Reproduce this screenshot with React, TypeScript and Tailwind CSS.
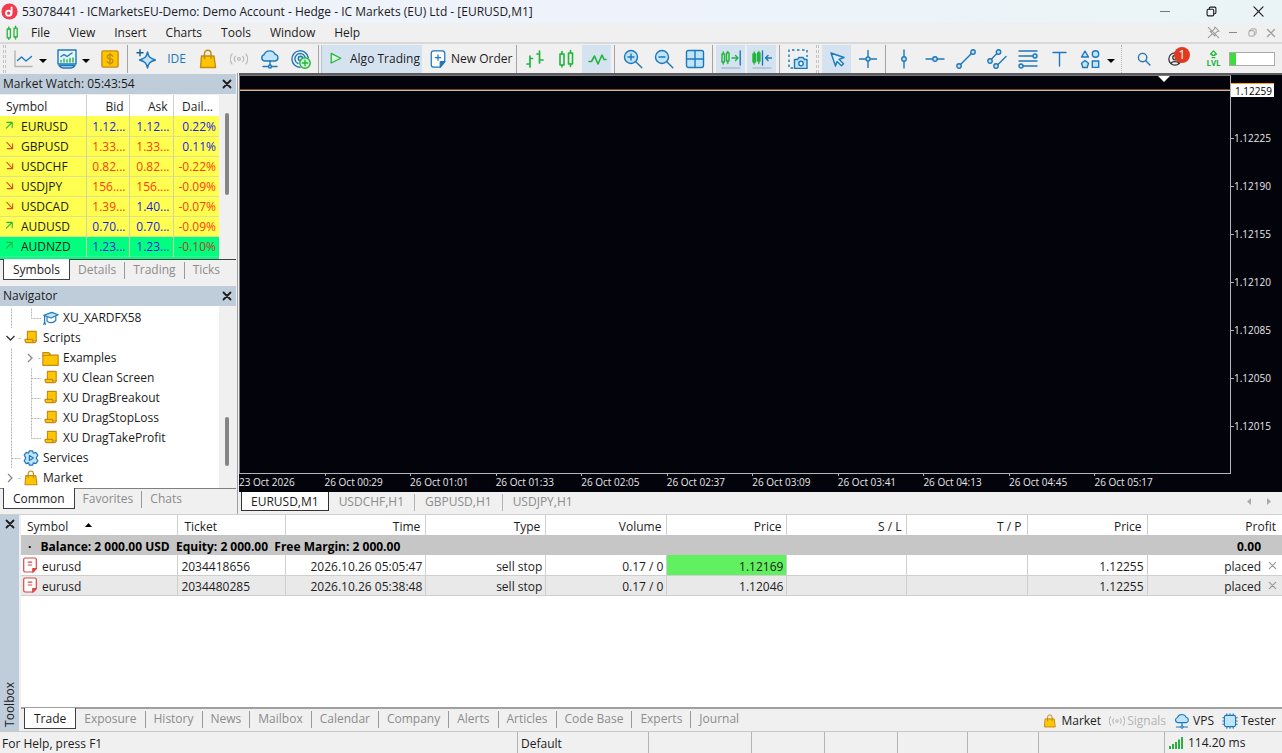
import React from "react";
import clsx from "clsx";

const BLUE = "#1f78b8";
const SKY = "#bfe4fc";
const GREEN = "#22b53c";
const GOLD = "#ffc600";
const AMBER = "#c48a14";

type IconProps = {
  children: React.ReactNode;
  className?: string;
  stroke?: string;
  fill?: string;
  width?: number;
};

const Icon = ({ children, className = "size-5", stroke = BLUE, fill = "none", width = 1.4 }: IconProps) => (
  <svg
    viewBox="0 0 20 20"
    className={clsx("shrink-0", className)}
    fill={fill}
    stroke={stroke}
    strokeWidth={width}
    strokeLinecap="round"
    strokeLinejoin="round"
    aria-hidden="true"
  >
    {children}
  </svg>
);

const BagIcon = ({ className }: { className?: string }) => (
  <Icon className={className} stroke={AMBER} fill={GOLD}>
    <path d="M6.500 8V4.500a3 3 0 0 1 6.500 0V8" fill="none" />
    <path d="M3.500 7h12.500l1.500 11.500H2.500z" />
    <path d="M13 7v2.500M6.500 7v2.500" />
  </Icon>
);

const CloudIcon = ({ className }: { className?: string }) => (
  <Icon className={className}>
    <path d="M4.500 12a3.300 3.300 0 0 1-.3-6.400 6 6 0 0 1 11-.2 3.400 3.400 0 0 1 .3 6.600z" fill={SKY} />
    <path d="M10 12v4M3 17.500h5M12 17.500h5" />
    <circle cx="10" cy="17.500" r="1.500" fill={SKY} />
  </Icon>
);

const SignalIcon = ({ className }: { className?: string }) => (
  <Icon className={className} stroke="#b9b9b9" width={1.3}>
    <circle cx="10" cy="10" r="1.600" />
    <path d="M5.800 7a5 5 0 0 0 0 6M14.200 7a5 5 0 0 1 0 6M2.200 4.500a9.500 9.500 0 0 0 0 11M17.800 4.500a9.500 9.500 0 0 1 0 11" />
  </Icon>
);

const CandlesIcon = ({ className }: { className?: string }) => (
  <Icon className={className} stroke={GREEN} width={1.6}>
    <rect x="4" y="5" width="4" height="11" />
    <rect x="12.500" y="4" width="4" height="11" />
    <path d="M6 2.500V5M6 16v2M14.500 1.500V4M14.500 15v2.500" />
  </Icon>
);

const CloseIcon = ({ className = "size-[10px]", width = 3.6 }: { className?: string; width?: number }) => (
  <Icon className={className} stroke="currentColor" width={width}>
    <path d="M3 3l14 14M17 3L3 17" />
  </Icon>
);

const ScriptIcon = () => (
  <Icon className="mb-[2px] size-4" stroke={AMBER} fill={GOLD}>
    <path d="M5.500 3h11v12H5.500z" />
    <path d="M2.500 13h9.500c0 2 .5 4 2 4H4.500c-1.500 0-2-2-2-4zM16.500 14.500c0 1.500-.5 2.500-2 2.500" />
  </Icon>
);

const RestoreIcon = ({ className }: { className?: string }) => (
  <Icon className={className} stroke="currentColor" width={2}>
    <rect x="2" y="6" width="12" height="12" rx="2" />
    <path d="M6 6V4a2 2 0 0 1 2-2h8a2 2 0 0 1 2 2v8a2 2 0 0 1-2 2h-2" />
  </Icon>
);

const ToolButton = ({
  label,
  active,
  children,
}: {
  label: string;
  active?: boolean;
  children: React.ReactNode;
}) => (
  <button
    type="button"
    aria-label={label}
    aria-pressed={active}
    className={clsx(
      "flex h-[28px] w-[31px] shrink-0 items-center justify-center border-x border-transparent bg-clip-padding",
      active && "bg-[#d5e3f1]"
    )}
  >
    {children}
  </button>
);

const Caret = ({ label }: { label: string }) => (
  <button type="button" aria-label={label} className="flex h-[28px] w-[8px] shrink-0 items-center pt-1">
    <svg viewBox="0 0 8 4" className="h-[4px] w-[8px]" aria-hidden="true">
      <path d="M0 0h8L4 4z" fill="#000" />
    </svg>
  </button>
);

const Sep = () => <span className="mx-[2px] h-[28px] w-px shrink-0 bg-[#a5a5a5]" />;

const Grip = () => (
  <span className="flex h-[28px] w-2 shrink-0 justify-center gap-px">
    <span className="border-l border-dashed border-[#c4c4c4]" />
    <span className="border-l border-dashed border-[#c4c4c4]" />
  </span>
);

const menus = ["File", "View", "Insert", "Charts", "Tools", "Window", "Help"];

const TitleBar = () => (
  <header className="flex h-[23px] shrink-0 items-center bg-gradient-to-r from-[#eff2f9] via-[#eef3fb] to-[#eaf4f6]">
    <svg viewBox="0 0 20 20" className="ml-px size-[17px]" aria-hidden="true">
      <circle cx="10" cy="10" r="9.500" fill="#f5394c" />
      <circle cx="9" cy="12" r="3" fill="none" stroke="#fff" strokeWidth="2.200" />
      <path d="M12.500 4.500v7c0 2-.8 3-2 3.500" fill="none" stroke="#fff" strokeWidth="2.200" />
    </svg>
    <h1 className="ml-1 flex-1 truncate">
      53078441 - ICMarketsEU-Demo: Demo Account - Hedge - IC Markets (EU) Ltd - [EURUSD,M1]
    </h1>
    <button type="button" aria-label="Minimize" className="flex w-[47px] justify-center">
      <span className="h-px w-[10px] bg-[#777]" />
    </button>
    <button type="button" aria-label="Restore" className="flex w-[47px] justify-center">
      <RestoreIcon className="size-[11px]" />
    </button>
    <button type="button" aria-label="Close" className="flex w-[47px] justify-center">
      <CloseIcon className="size-[13px]" width={1.8} />
    </button>
  </header>
);

const MenuBar = () => (
  <nav className="flex h-[19px] shrink-0 items-center">
    <CandlesIcon className="ml-1 size-4" />
    <ul className="flex flex-1 gap-[19px] pt-px pl-[11px]">
      {menus.map((m) => (
        <li key={m}>
          <button type="button">{m}</button>
        </li>
      ))}
    </ul>
    <div className="flex items-center gap-[7px] pr-[5px] text-[#9c9c9c]">
      <button type="button" aria-label="Unpin">
        <Icon className="size-[13px]" stroke="currentColor" width={1.6}>
          <path d="M12 1.500l6.500 6.500-3 .5-3 3-.5 4L4.500 8l4-.5 3-3zM8 12l-6 6M2 2l16 16" />
        </Icon>
      </button>
      <button type="button" aria-label="Minimize chart" className="flex w-3 justify-center">
        <span className="h-px w-2 bg-[#888]" />
      </button>
      <button type="button" aria-label="Restore chart" className="flex w-3 justify-center">
        <RestoreIcon className="size-[9px]" />
      </button>
      <button type="button" aria-label="Close chart" className="flex w-3 justify-center">
        <CloseIcon className="size-[10px]" width={2.6} />
      </button>
    </div>
  </nav>
);

const ToolBar = () => (
  <div className="flex h-[31px] shrink-0 items-center border-t-2 border-[#d9d9d9]">
    <Grip />
    <ToolButton label="Chart type">
      <Icon>
        <path d="M1 2v15.500H18" stroke="#b4b4b4" />
        <path d="M3.500 11.500l4-3.500 4.500 4 5.500-4.500" />
      </Icon>
    </ToolButton>
    <Caret label="Chart type options" />
    <span className="w-1 shrink-0" />
    <ToolButton label="Templates">
      <Icon>
        <path d="M1 1h18v14H1z" fill="#e2f4fe" />
        <path d="M2 16.500c1.500 2 3 2.500 4 2.500h8c1 0 2.500-.5 4-2.500z" fill={SKY} />
        <path d="M4 7.500l3-2 3 2 5-3.500" />
        <path d="M4 13v-1.500M7 13v-3M10 13v-2M13 13v-3.500M16 13V9" stroke={GREEN} />
      </Icon>
    </ToolButton>
    <Caret label="Template options" />
    <span className="w-1 shrink-0" />
    <ToolButton label="Symbols">
      <Icon className="size-[18px]" stroke={AMBER} width={1.5}>
        <rect x="1" y="1" width="18" height="18" rx="1.500" fill={GOLD} />
        <path d="M13 7c-.5-1.300-1.500-1.700-3-1.700-4 0-4 4.300 0 4.600 4.300.3 4.200 4.800 0 4.800-1.800 0-3-.7-3.300-2M10 3.800v12.400" />
      </Icon>
    </ToolButton>
    <Sep />
    <ToolButton label="AI assistant">
      <Icon>
        <path d="M11.500 3c1 5 2.500 6.500 8 8-5.500 1.500-7 3-8 8-1-5-2.500-6.500-8-8 5.500-1.500 7-3 8-8z" fill={SKY} />
        <path d="M4 .8v6M1 3.800h6" stroke="#125f9c" width={2} />
      </Icon>
    </ToolButton>
    <ToolButton label="IDE">
      <span className="text-[12px] text-[#1f78b8]">IDE</span>
    </ToolButton>
    <ToolButton label="Market">
      <BagIcon className="size-5" />
    </ToolButton>
    <ToolButton label="Signals">
      <SignalIcon className="size-[18px]" />
    </ToolButton>
    <ToolButton label="Virtual hosting">
      <CloudIcon className="size-5" />
    </ToolButton>
    <ToolButton label="Community">
      <Icon>
        <path d="M9 18.200A8.200 8.200 0 1 1 17.200 8.500M7 14.500a5.200 5.200 0 1 1 7-6.500" />
        <circle cx="9.500" cy="9.500" r="2.200" fill={SKY} />
        <circle cx="14" cy="14" r="5.200" fill="#d5f8da" stroke={GREEN} />
        <path d="M14 11.200v5.600M11.200 14h5.600" stroke={GREEN} />
      </Icon>
    </ToolButton>
    <Sep />
    <button type="button" className="flex h-[28px] w-[101px] shrink-0 items-center gap-[6px] border-l border-[#b8c4d0] bg-[#d5e3f1] pl-[6px]">
      <Icon className="size-4" stroke={GREEN} width={1.6}>
        <path d="M4 3l12 6-12 6z" fill="#d9f8dc" />
      </Icon>
      <span className="pt-px whitespace-nowrap">Algo Trading</span>
    </button>
    <button type="button" className="flex h-[28px] w-[92px] shrink-0 items-center gap-1 pl-[7px]">
      <Icon className="size-[18px]">
        <path d="M5 1h10a2.500 2.500 0 0 1 2.500 2.500V13l-5 6H5a2.500 2.500 0 0 1-2.500-2.500v-13A2.500 2.500 0 0 1 5 1z" fill="#fff" />
        <path d="M12.500 19v-6h5z" fill={BLUE} />
        <path d="M10 5.500v6M7 8.500h6" />
      </Icon>
      <span className="pt-px whitespace-nowrap">New Order</span>
    </button>
    <Sep />
    <ToolButton label="Bar chart">
      <Icon stroke={GREEN} width={1.7}>
        <path d="M5 7v11M2 15h3M5 9.500h2.500M14.500 2v12M12 5h2.500M14.500 11h3.500" />
      </Icon>
    </ToolButton>
    <ToolButton label="Candlesticks">
      <CandlesIcon className="size-5" />
    </ToolButton>
    <ToolButton label="Line chart" active>
      <Icon stroke={GREEN} width={1.6}>
        <path d="M2 12.500h2.500l3-5.500 3.500 8 4-9 2 4.500h2" />
      </Icon>
    </ToolButton>
    <Sep />
    <ToolButton label="Zoom in">
      <Icon>
        <circle cx="8" cy="8" r="6.500" fill={SKY} />
        <path d="M12.800 12.800l6 6M8 5v6M5 8h6" />
      </Icon>
    </ToolButton>
    <ToolButton label="Zoom out">
      <Icon>
        <circle cx="8" cy="8" r="6.500" fill={SKY} />
        <path d="M12.800 12.800l6 6M5 8h6" />
      </Icon>
    </ToolButton>
    <ToolButton label="Tile windows">
      <Icon>
        <rect x="1.500" y="1.500" width="17" height="17" rx="2" fill={SKY} />
        <path d="M10 1.500v17M1.500 10h17" />
      </Icon>
    </ToolButton>
    <Sep />
    <ToolButton label="Auto scroll" active>
      <Icon stroke={GREEN} width={1.4}>
        <path d="M1 5h2.500v8H1zM5.500 4H8v8H5.500zM2.200 3v2M2.200 13v2M6.800 2.500V4M6.800 12v2.500" />
        <path d="M11 9h6M14.500 6.500L17 9l-2.500 2.500" />
        <path d="M19.200 2v14" stroke={BLUE} />
        <path d="M1 19h18" stroke="#b4bbc3" />
      </Icon>
    </ToolButton>
    <ToolButton label="Chart shift" active>
      <Icon stroke={GREEN} width={1.4}>
        <path d="M1 5h2.500v8H1zM5.500 4H8v8H5.500zM2.200 3v2M2.200 13v2M6.800 2.500V4M6.800 12v2.500" fill={GREEN} />
        <path d="M10.500 2v14M19.500 9h-6M16 6.500L13.500 9l2.500 2.500" stroke={BLUE} />
        <path d="M1 19h18" stroke="#b4bbc3" />
      </Icon>
    </ToolButton>
    <Sep />
    <ToolButton label="Screenshot">
      <Icon>
        <path d="M5 19H1V1h18v7" strokeDasharray="2.500 2.500" strokeLinecap="butt" />
        <path d="M6.500 10.500h3L11 8.500h4l1.500 2h2.500v9H6.500z" fill={SKY} />
        <circle cx="13" cy="14.500" r="2.200" fill="#fff" />
      </Icon>
    </ToolButton>
    <Grip />
    <ToolButton label="Cursor" active>
      <Icon>
        <path d="M4 4l13 4.500-5 1.800 4.500 4.500-2 2L10 12.500 8.500 17z" fill="#d9eefc" />
      </Icon>
    </ToolButton>
    <ToolButton label="Crosshair">
      <Icon>
        <path d="M10 1.500v6M10 12.500v6M1.500 10h6M12.500 10h6" />
        <circle cx="10" cy="10" r="2" fill={SKY} />
      </Icon>
    </ToolButton>
    <Sep />
    <ToolButton label="Vertical line">
      <Icon>
        <path d="M10 1v7M10 12v7" />
        <circle cx="10" cy="10" r="2.200" fill={SKY} />
      </Icon>
    </ToolButton>
    <ToolButton label="Horizontal line">
      <Icon>
        <path d="M1 10h7M12 10h7" />
        <circle cx="10" cy="10" r="2.200" fill={SKY} />
      </Icon>
    </ToolButton>
    <ToolButton label="Trendline">
      <Icon>
        <path d="M4 16L16 4" />
        <circle cx="3" cy="17" r="2.200" fill={SKY} />
        <circle cx="17" cy="3" r="2.200" fill={SKY} />
      </Icon>
    </ToolButton>
    <ToolButton label="Channel">
      <Icon>
        <path d="M3.500 11L11 3.500M10 16.500l9-9" />
        <circle cx="3" cy="12" r="2.200" fill={SKY} />
        <circle cx="11.500" cy="3" r="2.200" fill={SKY} />
        <circle cx="9" cy="17" r="2.200" fill={SKY} />
      </Icon>
    </ToolButton>
    <ToolButton label="Fibonacci">
      <Icon>
        <path d="M1 2h18M1 7h14M1 12h18M5 17h14" />
        <circle cx="17" cy="7" r="2" fill={SKY} />
        <circle cx="3" cy="17" r="2" fill={SKY} />
      </Icon>
    </ToolButton>
    <ToolButton label="Text">
      <Icon>
        <path d="M4 3.500h13M10.500 3.500V17" />
      </Icon>
    </ToolButton>
    <ToolButton label="Shapes">
      <Icon fill={SKY}>
        <path d="M5 2l3.500 6h-7z" />
        <circle cx="15.500" cy="5" r="3.200" />
        <path d="M5 11.500l3.500 2.700-1.300 4.300H2.800L1.500 14.200z" />
        <rect x="12.300" y="12" width="6.400" height="6.400" />
      </Icon>
    </ToolButton>
    <span className="w-[2px] shrink-0" />
    <Caret label="Shape options" />
    <span className="mx-[6px] h-[28px] shrink-0 border-l border-dotted border-[#b0b0b0]" />
    <ToolButton label="Search">
      <Icon className="size-[14px]" width={2}>
        <circle cx="8" cy="8" r="6" />
        <path d="M12.500 12.500l6 6" />
      </Icon>
    </ToolButton>
    <button type="button" aria-label="Account, 1 notification" className="relative flex h-[28px] w-[31px] shrink-0 items-center justify-center">
      <Icon className="size-[14px]" stroke="#333" width={1.8}>
        <circle cx="10" cy="10" r="8.800" />
        <circle cx="10" cy="8" r="3.200" />
        <path d="M4.500 16.500c1-3.500 10-3.500 11 0" />
      </Icon>
      <span className="absolute top-[2px] right-0 flex size-[16px] items-center justify-center rounded-full bg-[#e03a20] text-[12px] text-white">
        1
      </span>
    </button>
    <button type="button" className="ml-2 flex w-[31px] shrink-0 flex-col items-center text-[8px] leading-[8px] font-bold text-[#22b53c]">
      <Icon className="size-[9px]" stroke={GREEN} width={2.6}>
        <path d="M10 2l7 7h-4v3H7V9H3zM7 17h6" />
      </Icon>
      LVL
    </button>
    <div role="progressbar" aria-label="Level" aria-valuenow={13} className="h-[14px] w-[46px] shrink-0 border border-[#aaa] bg-white">
      <div className="h-full w-[6px] bg-[#3fdc3f]" />
    </div>
  </div>
);

const PanelTitle = ({ title }: { title: string }) => (
  <div className="flex h-5 shrink-0 items-center justify-between bg-[#bfcddb] pr-1 pl-[3px]">
    <h2>{title}</h2>
    <button type="button" aria-label={`Close ${title}`}>
      <CloseIcon />
    </button>
  </div>
);

// first tab is the selected one
const Tabs = ({ tabs }: { tabs: string[] }) => (
  <div role="tablist" className="flex items-start pl-[3px]">
    {tabs.map((tab, i) => (
      <button
        key={tab}
        type="button"
        role="tab"
        aria-selected={i === 0}
        className={clsx(
          "flex items-center whitespace-nowrap",
          i === 0
            ? "-mt-px h-[21px] border border-t-0 border-[#404040] bg-white px-[9px] pt-px"
            : "h-5 text-[#8c8c8c]"
        )}
      >
        {i > 1 && <span className="h-[17px] w-px bg-[#9a9a9a]" />}
        <span className={clsx(i > 0 && "px-2")}>{tab}</span>
      </button>
    ))}
  </div>
);

type Quote = {
  symbol: string;
  up: boolean;
  cells: [string, boolean][];
  green?: boolean;
};

const quotes: Quote[] = [
  { symbol: "EURUSD", up: true, cells: [["1.12...", true], ["1.12...", true], ["0.22%", true]] },
  { symbol: "GBPUSD", up: false, cells: [["1.33...", false], ["1.33...", false], ["0.11%", true]] },
  { symbol: "USDCHF", up: false, cells: [["0.82...", false], ["0.82...", false], ["-0.22%", false]] },
  { symbol: "USDJPY", up: false, cells: [["156....", false], ["156....", false], ["-0.09%", false]] },
  { symbol: "USDCAD", up: false, cells: [["1.39...", false], ["1.40...", true], ["-0.07%", false]] },
  { symbol: "AUDUSD", up: true, cells: [["0.70...", true], ["0.70...", true], ["-0.09%", false]] },
  { symbol: "AUDNZD", up: true, cells: [["1.23...", true], ["1.23...", true], ["-0.10%", false]], green: true },
];

const MarketWatch = () => (
  <section className="flex min-h-0 flex-[212_1_0%] flex-col">
    <PanelTitle title="Market Watch: 05:43:54" />
    <div className="flex min-h-0 flex-1 overflow-hidden border-b border-[#404040] pt-px">
      <div className="min-w-0 flex-1 overflow-hidden bg-white">
        <table className="w-full table-fixed border-collapse">
          <colgroup>
            <col />
            <col className="w-[43px]" />
            <col className="w-[44px]" />
            <col className="w-[46px]" />
          </colgroup>
          <thead>
            <tr className="h-[21px]">
              <th className="border-r border-[#cfcfcf] p-0 pt-[2px] pl-[6px] text-left font-normal">Symbol</th>
              <th className="border-r border-[#cfcfcf] p-0 pt-[2px] pr-[5px] text-right font-normal">Bid</th>
              <th className="border-r border-[#cfcfcf] p-0 pt-[2px] pr-[5px] text-right font-normal">Ask</th>
              <th className="p-0 pt-[2px] pr-[6px] text-right font-normal">Dail...</th>
            </tr>
          </thead>
          <tbody>
            {quotes.map((q) => (
              <tr
                key={q.symbol}
                className={clsx(
                  "h-5 border-b",
                  q.green ? "border-[#4fe39a] bg-[#00ff7f]" : "border-[#e0e08c] bg-[#ffff50]"
                )}
              >
                <td className="border-r border-[#d2d2a0] p-0 pt-[2px] pl-[5px]">
                  <div className="flex items-center gap-[7px]">
                    <Icon className="mb-[3px] size-[9px]" stroke={q.up ? GREEN : "#e04a2a"} width={2.4}>
                      <path d={q.up ? "M3 16L16 3M4 3h12v12" : "M4 3l13 14M17 6v11H5"} />
                    </Icon>
                    {q.symbol}
                  </div>
                </td>
                {q.cells.map(([value, rise], i) => (
                  <td
                    key={i}
                    className={clsx(
                      "p-0 pt-[2px] pr-[3px] text-right whitespace-nowrap",
                      i < 2 && "border-r border-[#d2d2a0]",
                      rise ? "text-[#1c1ce0]" : q.green ? "text-[#b8401c]" : "text-[#ff3a14]"
                    )}
                  >
                    {value}
                  </td>
                ))}
              </tr>
            ))}
            <tr className="h-5 bg-[#00ff7f]">
              <td colSpan={4} />
            </tr>
          </tbody>
        </table>
      </div>
      <div className="w-[17px] pt-[18px] pl-[6px]">
        <div className="h-[82px] w-1 rounded-full bg-[#858585]" />
      </div>
    </div>
    <div className="h-[26px] shrink-0">
      <Tabs tabs={["Symbols", "Details", "Trading", "Ticks"]} />
    </div>
  </section>
);

type Guide = "line" | "elbow" | "tee" | "open" | "closed";

const guidePaths: Record<Guide, string> = {
  line: "M10 0v20",
  elbow: "M10 0v10h10",
  tee: "M10 0v20M10 10h10",
  open: "M17 10h4",
  closed: "M17 10h4",
};

const TreeGuide = ({ kind }: { kind: Guide }) => (
  <svg viewBox="0 0 20 20" className="size-5 shrink-0" fill="none" aria-hidden="true">
    <path d={guidePaths[kind]} stroke="#b5b5b5" strokeDasharray="2 1" transform="translate(.5 .5)" />
    {kind === "open" && <path d="M5.500 8l4 4 4-4" stroke="#333" strokeWidth="1.300" />}
    {kind === "closed" && <path d="M7 6l4 4-4 4" stroke="#888" strokeWidth="1.300" />}
  </svg>
);

const FolderIcon = () => (
  <Icon className="size-[17px]" stroke={AMBER} fill={GOLD}>
    <path d="M1 3h7l2 3h9v12H1z" />
    <path d="M1 6.500h7l2-1.500" />
  </Icon>
);

const ExpertIcon = () => (
  <Icon className="size-4" width={1.5}>
    <path d="M1 6.500L11 3l8 3-9 4z" fill={SKY} />
    <path d="M5 9v5c3 3 9 2 11-1V8M2 7v9M1 18l1-3 1 3" fill="none" />
  </Icon>
);

const ServiceIcon = () => (
  <Icon className="size-4" width={1.5}>
    <path d="M8 1h4l1 3 3-1 2.500 3.500L16.500 10l2 3.500L16 17l-3-1-1 3H8l-1-3-3 1-2.500-3.500 2-3.500-2-3.500L4 3l3 1z" fill={SKY} />
    <path d="M8 7l5 3-5 3z" fill={SKY} />
  </Icon>
);

const treeItems: { label: string; guides: Guide[]; icon: React.ReactNode }[] = [
  { label: "XU_XARDFX58", guides: ["line", "elbow"], icon: <ExpertIcon /> },
  { label: "Scripts", guides: ["open"], icon: <ScriptIcon /> },
  { label: "Examples", guides: ["line", "closed"], icon: <FolderIcon /> },
  { label: "XU Clean Screen", guides: ["line", "tee"], icon: <ScriptIcon /> },
  { label: "XU DragBreakout", guides: ["line", "tee"], icon: <ScriptIcon /> },
  { label: "XU DragStopLoss", guides: ["line", "tee"], icon: <ScriptIcon /> },
  { label: "XU DragTakeProfit", guides: ["line", "elbow"], icon: <ScriptIcon /> },
  { label: "Services", guides: ["tee"], icon: <ServiceIcon /> },
  { label: "Market", guides: ["closed"], icon: <BagIcon className="size-4" /> },
];

const Navigator = () => (
  <section className="flex min-h-0 flex-[228_1_0%] flex-col">
    <PanelTitle title="Navigator" />
    <div className="flex min-h-0 flex-1 overflow-hidden border-b border-[#808080]">
      <ul className="flex-1 overflow-hidden bg-white pt-[2px] pl-px">
        {treeItems.map((item) => (
          <li key={item.label} className="flex h-5 items-center">
            {item.guides.map((g, i) => (
              <TreeGuide key={i} kind={g} />
            ))}
            <span className="mr-[3px] flex w-[19px] justify-center">{item.icon}</span>
            {item.label}
          </li>
        ))}
      </ul>
      <div className="flex w-[17px] flex-col justify-end pb-[22px] pl-[6px]">
        <div className="h-[49px] w-1 rounded-full bg-[#858585]" />
      </div>
    </div>
    <div className="h-[25px] shrink-0">
      <Tabs tabs={["Common", "Favorites", "Chats"]} />
    </div>
  </section>
);

const prices = ["1.12225", "1.12190", "1.12155", "1.12120", "1.12085", "1.12050", "1.12015"];
const times = [
  "23 Oct 2026",
  "26 Oct 00:29",
  "26 Oct 01:01",
  "26 Oct 01:33",
  "26 Oct 02:05",
  "26 Oct 02:37",
  "26 Oct 03:09",
  "26 Oct 03:41",
  "26 Oct 04:13",
  "26 Oct 04:45",
  "26 Oct 05:17",
];

const Chart = () => (
  <main className="flex min-w-0 flex-1 flex-col">
    <div className="flex min-h-0 flex-1 flex-col border-t-2 border-[#5c5c60] bg-[#03030c] text-[10px] text-[#e8e8e8]">
      <div className="flex min-h-0 flex-1">
        <div className="min-w-0 flex-1 border border-t-[#77777c] border-r-[#b4b4b8] border-b-[#b4b4b8] border-l-[#77777c]">
          <div className="flex h-[14px] justify-end border-b border-[#7a4a08] pr-[60px]">
            <svg viewBox="0 0 12 6" className="h-[6px] w-3" aria-hidden="true">
              <path d="M0 0h12L6 6z" fill="#fff" />
            </svg>
          </div>
          <div className="h-px bg-[#c9b8b8]" />
        </div>
        <div className="w-[51px] shrink-0 pt-2">
          <div className="flex h-[14px] w-[43px] items-center border-t border-[#ffa500] bg-white pl-1 text-black">
            1.12259
          </div>
          <ul className="mt-[17px]">
            {prices.map((p) => (
              <li key={p} className="flex h-12 items-center">
                <span className="h-px w-[3px] bg-[#b4b4b8]" />
                {p}
              </li>
            ))}
          </ul>
        </div>
      </div>
      <ul className="mr-[51px] flex h-[18px] shrink-0 pr-[51px]">
        {times.map((t, i) => (
          <li key={t} className="min-w-0 flex-1 leading-[13px] whitespace-nowrap">
            <span className={clsx("block h-[2px] w-px", i > 0 && "bg-[#b4b4b8]")} />
            {t}
          </li>
        ))}
      </ul>
    </div>
    <div className="flex h-[22px] shrink-0 items-start justify-between">
      <div role="tablist" className="flex pl-[2px]">
        {["EURUSD,M1", "USDCHF,H1", "GBPUSD,H1", "USDJPY,H1"].map((tab, i) => (
          <button
            key={tab}
            type="button"
            role="tab"
            aria-selected={i === 0}
            className={clsx(
              "flex h-[19px] items-center",
              i === 0 ? "border border-t-0 border-[#303030] bg-white px-[9px] pt-px" : "pt-px text-[#8c8c8c]"
            )}
          >
            {i > 1 && <span className="h-[17px] w-px bg-[#b4b4b4]" />}
            <span className={clsx(i > 0 && "px-[10px]")}>{tab}</span>
          </button>
        ))}
      </div>
      <div className="flex gap-4 pt-[6px] pr-[11px]">
        <button type="button" aria-label="Previous charts">
          <svg viewBox="0 0 4 7" className="h-[7px] w-1" aria-hidden="true">
            <path d="M4 0v7L0 3.500z" fill="#aaa" />
          </svg>
        </button>
        <button type="button" aria-label="Next charts">
          <svg viewBox="0 0 4 7" className="h-[7px] w-1" aria-hidden="true">
            <path d="M0 0v7l4-3.500z" fill="#aaa" />
          </svg>
        </button>
      </div>
    </div>
  </main>
);

const orders = [
  { ticket: "2034418656", time: "2026.10.26 05:05:47", price: "1.12169", hit: true },
  { ticket: "2034480285", time: "2026.10.26 05:38:48", price: "1.12046", hit: false },
];

const columns = ["Time", "Type", "Volume", "Price", "S / L", "T / P", "Price"];

const OrdersTable = () => (
  <table className="w-full table-fixed border-collapse">
    <colgroup>
      <col />
      <col className="w-[8.56%]" />
      <col className="w-[11.1%]" />
      <col className="w-[9.52%]" />
      <col className="w-[9.6%]" />
      <col className="w-[9.52%]" />
      <col className="w-[9.52%]" />
      <col className="w-[9.52%]" />
      <col className="w-[9.52%]" />
      <col className="w-[10.7%]" />
    </colgroup>
    <thead>
      <tr className="h-5">
        <th className="border-r border-[#cfcfcf] p-0 pt-[3px] pl-[6px] text-left font-normal">
          <span className="flex items-center gap-[17px]">
            Symbol
            <svg viewBox="0 0 7 4" className="mb-1 h-1 w-[7px]" aria-hidden="true">
              <path d="M0 4h7L3.500 0z" fill="#000" />
            </svg>
          </span>
        </th>
        <th className="border-r border-[#cfcfcf] p-0 pt-[3px] pl-[6px] text-left font-normal">Ticket</th>
        {columns.map((c, i) => (
          <th key={i} className="border-r border-[#cfcfcf] p-0 pt-[3px] pr-[5px] text-right font-normal">
            {c}
          </th>
        ))}
        <th className="p-0 pt-[3px] pr-[6px] text-right font-normal">Profit</th>
      </tr>
    </thead>
    <tbody>
      <tr className="h-5 bg-[#c6c6c6] font-bold text-black">
        <td colSpan={9} className="p-0 pt-[3px] pl-[7px]">
          <span className="mr-[9px]">·</span>
          <span className="whitespace-pre">Balance: 2 000.00 USD  Equity: 2 000.00  Free Margin: 2 000.00</span>
        </td>
        <td className="p-0 pt-[3px] pr-[21px] text-right">0.00</td>
      </tr>
      {orders.map((o, i) => (
        <tr key={o.ticket} className={clsx("h-5 border-b border-[#cfcfcf]", i % 2 === 1 && "bg-[#e9e9e9]")}>
          <td className="border-r border-[#cfcfcf] p-0 pt-[3px] pl-[2px]">
            <div className="flex h-4 items-center gap-[5px]">
              <Icon className="mb-[3px] h-4 w-[14px]" stroke="#dc4444" width={1.7}>
                <path d="M3 0h14a2 2 0 0 1 2 2v13l-5 5H3a2 2 0 0 1-2-2V2a2 2 0 0 1 2-2z" fill="#fff" />
                <path d="M14 20v-5h5zM7.500 6h5M7.500 10h5" fill="#dc4444" />
              </Icon>
              eurusd
            </div>
          </td>
          <td className="border-r border-[#cfcfcf] p-0 pt-[3px] pl-[3px]">{o.ticket}</td>
          <td className="border-r border-[#cfcfcf] p-0 pt-[3px] pr-[3px] text-right whitespace-nowrap">{o.time}</td>
          <td className="border-r border-[#cfcfcf] p-0 pt-[3px] pr-[3px] text-right">sell stop</td>
          <td className="border-r border-[#cfcfcf] p-0 pt-[3px] pr-[3px] text-right">0.17 / 0</td>
          <td className={clsx("border-r border-[#cfcfcf] p-0 pt-[3px] pr-[3px] text-right", o.hit && "bg-[#60f060]")}>
            {o.price}
          </td>
          <td className="border-r border-[#cfcfcf] p-0" />
          <td className="border-r border-[#cfcfcf] p-0" />
          <td className="border-r border-[#cfcfcf] p-0 pt-[3px] pr-[3px] text-right">1.12255</td>
          <td className="p-0 pt-[3px] pr-[5px]">
            <div className="flex h-4 items-center justify-end gap-[7px]">
              placed
              <button type="button" aria-label={`Cancel ${o.ticket}`} className="mb-[3px] text-[#999]">
                <CloseIcon className="size-[9px]" width={2.6} />
              </button>
            </div>
          </td>
        </tr>
      ))}
    </tbody>
  </table>
);

const toolboxTabs = [
  "Trade",
  "Exposure",
  "History",
  "News",
  "Mailbox",
  "Calendar",
  "Company",
  "Alerts",
  "Articles",
  "Code Base",
  "Experts",
  "Journal",
];

const Toolbox = () => (
  <section className="flex min-h-0 flex-[216_1_0%] border-t border-[#d0d0d0]">
    <div className="flex w-[19px] shrink-0 flex-col items-center justify-between bg-[#bfcddb] pt-1 pb-1">
      <button type="button" aria-label="Close Toolbox">
        <CloseIcon />
      </button>
      <h2 className="rotate-180 leading-4 [writing-mode:vertical-rl]">Toolbox</h2>
    </div>
    <div className="flex min-w-0 flex-1 flex-col pl-[2px]">
      <div className="min-h-0 flex-1 overflow-hidden border-b-2 border-[#a0a0a0] bg-white">
        <OrdersTable />
      </div>
      <div className="flex h-[22px] shrink-0 justify-between">
        <Tabs tabs={toolboxTabs} />
        <div className="flex items-center gap-2 pt-px pr-[6px]">
          <button type="button" className="flex items-center gap-1">
            <BagIcon className="size-[14px]" />
            Market
          </button>
          <button type="button" className="flex items-center gap-[2px] text-[#b4b4b4]">
            <SignalIcon className="size-4" />
            Signals
          </button>
          <button type="button" className="flex items-center gap-[3px]">
            <CloudIcon className="size-4" />
            VPS
          </button>
          <button type="button" className="flex items-center gap-[3px]">
            <Icon className="size-4">
              <path d="M6 1v18M10 1v18M14 1v18M1 6h18M1 10h18M1 14h18" />
              <rect x="3" y="3" width="14" height="14" rx="2" fill={SKY} />
            </Icon>
            Tester
          </button>
        </div>
      </div>
    </div>
  </section>
);

const StatusBar = () => (
  <footer className="flex h-[22px] shrink-0 items-stretch border-t border-[#c8c8c8] leading-[23px]">
    <span className="flex-1 pl-[2px]">For Help, press F1</span>
    <span className="w-[131px] border-l border-[#b4b4b4] pl-[3px]">Default</span>
    <span className="w-[103px] border-l border-[#b4b4b4]" />
    <span className="w-[73px] border-l border-[#b4b4b4]" />
    <span className="w-[73px] border-l border-[#b4b4b4]" />
    <span className="w-[70px] border-l border-[#b4b4b4]" />
    <span className="w-[71px] border-l border-[#b4b4b4]" />
    <span className="w-[126px] border-l border-[#b4b4b4]" />
    <span className="flex w-[118px] items-center gap-[5px] border-l border-[#b4b4b4] pl-1">
      <svg viewBox="0 0 14 12" className="h-3 w-[14px]" aria-hidden="true">
        <path d="M0 9h2v3H0zM3 7h2v5H3zM6 5h2v7H6zM9 2.500h2V12H9zM12 0h2v12h-2z" fill="#2fae48" />
      </svg>
      114.20 ms
    </span>
  </footer>
);

const App = () => (
  <div className="flex h-screen flex-col overflow-hidden bg-[#f0f0f0] font-['Open_Sans','Noto_Sans',sans-serif] text-[12px] leading-[16px] text-[#1c1c1c]">
    <TitleBar />
    <MenuBar />
    <ToolBar />
    <div className="flex min-h-0 flex-[442_1_0%]">
      <aside className="flex w-[236px] shrink-0 flex-col pt-px">
        <MarketWatch />
        <Navigator />
      </aside>
      <span className="mr-px ml-[1px] w-px bg-[#a0a0a0]" />
      <Chart />
    </div>
    <Toolbox />
    <StatusBar />
  </div>
);

export default App;
